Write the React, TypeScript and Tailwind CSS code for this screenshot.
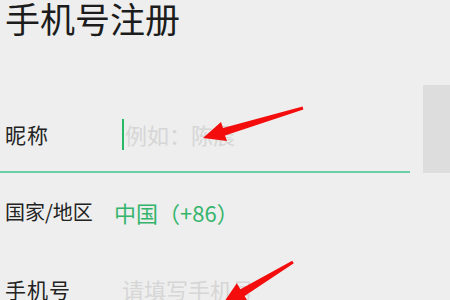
export default function App() {
  return (
    <div className="relative w-[450px] h-[300px] overflow-hidden bg-[#eeeeee] font-['Noto_Sans_CJK_SC','Noto_Sans',sans-serif]">
      <h1 className="pl-[5px] h-[36px] text-[35px] leading-[36px] font-normal text-[#1c1c1c]">手机号注册</h1>

      <div className="mt-[49px] flex">
        <div className="w-[410px] h-[88px] box-border border-b-2 border-[#68d0a4] flex items-start pt-[34px]">
          <span className="w-[122px] pl-[5px] text-[21px] leading-[31px] tracking-[1px] text-[#222222]">昵称</span>
          <span className="w-[2px] h-[31px] bg-[#27b965]" />
          <span className="ml-[1px] text-[22px] leading-[31px] text-[#d6d6d6]">例如：陈晨</span>
        </div>
        <div className="ml-[13px] w-[27px] h-[88px] bg-[#dddddd]" />
      </div>

      <div className="pt-[24px] flex items-center h-[54px]">
        <span className="w-[114px] pl-[5px] text-[20px] leading-[30px] text-[#222222]">国家/地区</span>
        <span className="text-[22px] leading-[30px] text-[#35b56c]">中国（+86）</span>
      </div>

      <div className="mt-[47px] flex items-center">
        <span className="w-[122px] pl-[5px] text-[21px] leading-[30px] tracking-[1px] text-[#222222]">手机号</span>
        <span className="text-[22px] leading-[30px] text-[#d6d6d6]">请填写手机号</span>
      </div>

      <svg className="absolute inset-0 pointer-events-none" width="450" height="300" viewBox="0 0 450 300">
        <polygon
          points="203,138 221,122 223,128 302.6,106.6 303.4,109.4 225,135.5 227,141"
          fill="#f30d0d"
        />
        <polygon
          points="222,305 236.8,283.2 240.4,289.2 292.2,260.7 293.8,263.3 244.6,296 248.2,302"
          fill="#f30d0d"
        />
      </svg>
    </div>
  )
}
